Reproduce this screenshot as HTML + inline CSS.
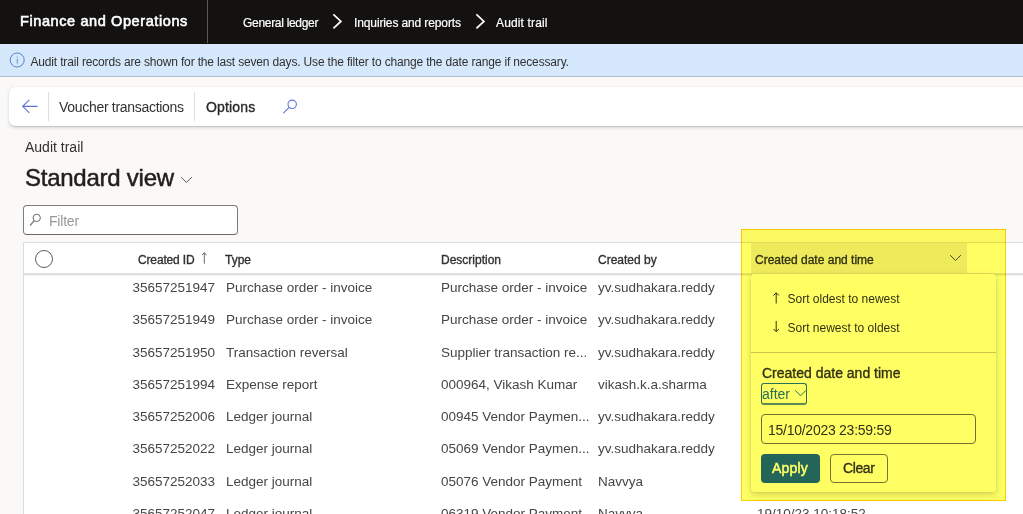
<!DOCTYPE html>
<html><head><meta charset="utf-8">
<style>
*{box-sizing:border-box;margin:0;padding:0}
html,body{width:1023px;height:514px;overflow:hidden;background:#faf9f8;font-family:"Liberation Sans",sans-serif;color:#323130}
.a{position:absolute;white-space:nowrap}
#top{position:absolute;left:0;top:0;width:1023px;height:44px;background:#131211}
#info{position:absolute;left:0;top:44px;width:1023px;height:33px;background:#d6e8fb;border-bottom:1px solid #b3bfcb}
#tb{position:absolute;left:9px;top:87px;width:1030px;height:39px;background:#fff;border-radius:6px;box-shadow:0 1.6px 3.6px rgba(0,0,0,.13),0 0.3px 0.9px rgba(0,0,0,.11)}
#grid{position:absolute;left:23px;top:242px;width:1010px;height:290px;background:#fff;border:1px solid #dedcda}
.hd{font-size:12px;color:#323130;-webkit-text-stroke:0.35px #323130}
.sb{-webkit-text-stroke:0.35px currentColor}
.sb5{-webkit-text-stroke:0.5px currentColor}
.sb2{-webkit-text-stroke:0.2px currentColor}
.cell{font-size:13.5px;color:#474645;letter-spacing:0}
#hl{position:absolute;left:740.5px;top:229px;width:265px;height:272px;background:#ffff64;mix-blend-mode:multiply;border:1.8px solid #ffcc00}
#pop{position:absolute;left:751px;top:274px;width:245px;height:218px;background:#fff;border-radius:3px;box-shadow:0 3px 7px rgba(0,0,0,.16),0 0 2px rgba(0,0,0,.12)}
</style></head><body>

<div id="top">
  <div class="a m" style="left:20px;top:12.5px;font-size:14.5px;letter-spacing:0.6px;color:#fff;-webkit-text-stroke:0.6px #fff">Finance and Operations</div>
  <div style="position:absolute;left:207px;top:0;width:1px;height:43px;background:#5a5958"></div>
  <div class="a m sb2" style="left:243px;top:16px;font-size:12px;color:#fff;letter-spacing:-0.3px">General ledger</div>
  <svg class="a" style="left:331px;top:13px" width="12" height="18" viewBox="0 0 12 18"><path d="M2.4 1.4 L9.9 8.4 L2.4 15.4" fill="none" stroke="#fff" stroke-width="1.7"/></svg>
  <div class="a m sb2" style="left:354px;top:16px;font-size:12px;letter-spacing:-0.12px;color:#fff">Inquiries and reports</div>
  <svg class="a" style="left:474px;top:13px" width="12" height="18" viewBox="0 0 12 18"><path d="M2.4 1.4 L9.9 8.4 L2.4 15.4" fill="none" stroke="#fff" stroke-width="1.7"/></svg>
  <div class="a m sb2" style="left:496px;top:16px;font-size:12px;letter-spacing:0.15px;color:#fff">Audit trail</div>
</div>

<div id="info">
  <svg class="a" style="left:9px;top:8px" width="18" height="18" viewBox="0 0 18 18"><circle cx="8.2" cy="8" r="7" fill="none" stroke="#5487c8" stroke-width="1"/><rect x="7.8" y="6.8" width="0.9" height="4.8" fill="#5a86c0"/><circle cx="8.25" cy="5" r="0.6" fill="#5a86c0"/></svg>
  <div class="a m" style="left:30.5px;top:10.5px;font-size:12px;color:#323130;letter-spacing:-0.165px">Audit trail records are shown for the last seven days. Use the filter to change the date range if necessary.</div>
</div>

<div id="tb">
  <svg class="a" style="left:12px;top:11px" width="17" height="16" viewBox="0 0 17 16"><path d="M1.7 8.3 H16.6 M8.3 1.9 L1.7 8.3 L8.3 14.8" fill="none" stroke="#5f74d8" stroke-width="1.15"/></svg>
  <div style="position:absolute;left:39px;top:5px;width:1px;height:29px;background:#e1dfdd"></div>
  <div class="a m" style="left:50px;top:12px;font-size:14px;color:#323130;letter-spacing:-0.3px">Voucher transactions</div>
  <div style="position:absolute;left:185px;top:5px;width:1px;height:29px;background:#e1dfdd"></div>
  <div class="a m sb" style="left:197px;top:12px;font-size:14px;letter-spacing:0.15px;color:#2b2a29">Options</div>
  <svg class="a" style="left:273px;top:11px" width="18" height="18" viewBox="0 0 18 18"><circle cx="10.2" cy="6.3" r="4.2" fill="none" stroke="#6276dc" stroke-width="1.1"/><path d="M7.2 9.3 L1.6 14.9" stroke="#6276dc" stroke-width="1.1" stroke-linecap="round"/></svg>
</div>

<div class="a m" style="left:25px;top:139px;font-size:14px;color:#323130">Audit trail</div>
<div class="a m sb5" style="left:25px;top:164px;font-size:24px;letter-spacing:-0.25px;color:#201f1e">Standard view</div>
<svg class="a" style="left:180px;top:175px" width="14" height="10" viewBox="0 0 14 10"><path d="M1 2.2 L6.3 7.4 L11.9 2.2" fill="none" stroke="#5d5b59" stroke-width="1"/></svg>

<div style="position:absolute;left:23px;top:205px;width:215px;height:30px;background:#fff;border:1.5px solid #7d7c7b;border-bottom-color:#6d6c6b;border-radius:4px"></div>
<svg class="a" style="left:28px;top:213px" width="15" height="15" viewBox="0 0 15 15"><circle cx="8.7" cy="4.9" r="3.7" fill="none" stroke="#6a6a6a" stroke-width="1"/><path d="M6.1 7.6 L2.1 12.6" stroke="#6a6a6a" stroke-width="1.1"/></svg>
<div class="a m" style="left:49px;top:213px;font-size:14px;color:#9a9896;letter-spacing:-0.2px">Filter</div>

<div id="grid"></div>
<div style="position:absolute;left:24px;top:273px;width:1000px;height:1px;background:#e6e4e2"></div><div style="position:absolute;left:24px;top:274px;width:1000px;height:1px;background:#dcdad8"></div>
<div style="position:absolute;left:24px;top:275px;width:1000px;height:2px;background:linear-gradient(#f1f0ef,#fff)"></div>
<div style="position:absolute;left:751px;top:243px;width:216px;height:29.5px;background:#edebe9"></div>
<div style="position:absolute;left:35px;top:250px;width:18px;height:18px;border:1.3px solid #605e5c;border-radius:50%"></div>
<div class="a m hd" style="left:138px;top:253px;letter-spacing:-0.15px">Created ID</div>
<svg class="a" style="left:200px;top:252px" width="10" height="12" viewBox="0 0 10 12"><path d="M4.3 11.7 V0.8 M2 3 L4.3 0.8 L6.6 3" fill="none" stroke="#5a5856" stroke-width="0.9"/></svg>
<div class="a m hd" style="left:225px;top:253px">Type</div>
<div class="a m hd" style="left:441px;top:253px">Description</div>
<div class="a m hd" style="left:598px;top:253px">Created by</div>
<div class="a m hd" style="left:755px;top:253px">Created date and time</div>
<svg class="a" style="left:949px;top:253px" width="13" height="10" viewBox="0 0 13 10"><path d="M1.2 2.2 L6.5 7.5 L11.8 2.2" fill="none" stroke="#484644" stroke-width="1"/></svg>

<div class="a m cell" style="right:808px;top:280.0px">35657251947</div>
<div class="a m cell" style="left:226px;top:280.0px">Purchase order - invoice</div>
<div class="a m cell" style="left:441px;top:280.0px">Purchase order - invoice</div>
<div class="a m cell" style="left:598px;top:280.0px">yv.sudhakara.reddy</div>
<div class="a m cell" style="right:808px;top:312.4px">35657251949</div>
<div class="a m cell" style="left:226px;top:312.4px">Purchase order - invoice</div>
<div class="a m cell" style="left:441px;top:312.4px">Purchase order - invoice</div>
<div class="a m cell" style="left:598px;top:312.4px">yv.sudhakara.reddy</div>
<div class="a m cell" style="right:808px;top:344.8px">35657251950</div>
<div class="a m cell" style="left:226px;top:344.8px">Transaction reversal</div>
<div class="a m cell" style="left:441px;top:344.8px">Supplier transaction re...</div>
<div class="a m cell" style="left:598px;top:344.8px">yv.sudhakara.reddy</div>
<div class="a m cell" style="right:808px;top:377.2px">35657251994</div>
<div class="a m cell" style="left:226px;top:377.2px">Expense report</div>
<div class="a m cell" style="left:441px;top:377.2px">000964, Vikash Kumar</div>
<div class="a m cell" style="left:598px;top:377.2px">vikash.k.a.sharma</div>
<div class="a m cell" style="right:808px;top:408.6px">35657252006</div>
<div class="a m cell" style="left:226px;top:408.6px">Ledger journal</div>
<div class="a m cell" style="left:441px;top:408.6px">00945 Vendor Paymen...</div>
<div class="a m cell" style="left:598px;top:408.6px">yv.sudhakara.reddy</div>
<div class="a m cell" style="right:808px;top:441.0px">35657252022</div>
<div class="a m cell" style="left:226px;top:441.0px">Ledger journal</div>
<div class="a m cell" style="left:441px;top:441.0px">05069 Vendor Paymen...</div>
<div class="a m cell" style="left:598px;top:441.0px">yv.sudhakara.reddy</div>
<div class="a m cell" style="right:808px;top:474.4px">35657252033</div>
<div class="a m cell" style="left:226px;top:474.4px">Ledger journal</div>
<div class="a m cell" style="left:441px;top:474.4px">05076 Vendor Payment</div>
<div class="a m cell" style="left:598px;top:474.4px">Navvya</div>
<div class="a m cell" style="right:808px;top:505.5px">35657252047</div>
<div class="a m cell" style="left:226px;top:505.5px">Ledger journal</div>
<div class="a m cell" style="left:441px;top:505.5px">06319 Vendor Payment</div>
<div class="a m cell" style="left:598px;top:505.5px">Navvya</div>
<div class="a m cell" style="left:757px;top:505.5px">19/10/23 10:18:52</div>

<div id="pop">
  <svg class="a" style="left:20px;top:17px" width="10" height="14" viewBox="0 0 10 14"><path d="M5.2 12.5 V1.8 M2.5 4.5 L5.2 1.8 L7.9 4.5" fill="none" stroke="#323130" stroke-width="1"/></svg>
  <div class="a m" style="left:36.5px;top:18px;font-size:12px;color:#323130;letter-spacing:0px">Sort oldest to newest</div>
  <svg class="a" style="left:20px;top:46px" width="10" height="14" viewBox="0 0 10 14"><path d="M5.2 1 V11.7 M2.5 9 L5.2 11.7 L7.9 9" fill="none" stroke="#323130" stroke-width="1"/></svg>
  <div class="a m" style="left:36.5px;top:47px;font-size:12px;color:#323130;letter-spacing:0px">Sort newest to oldest</div>
  <div style="position:absolute;left:0;top:78px;width:245px;height:1px;background:#c8c6c4"></div>
  <div class="a m sb" style="left:11px;top:91px;font-size:14px;color:#323130">Created date and time</div>
  <div style="position:absolute;left:10px;top:109px;width:46px;height:22px;border:1px solid #2a6fe0;border-bottom:2px solid #5a8ad0;border-radius:3px"></div>
  <div class="a m" style="left:11px;top:112px;font-size:14px;color:#2a6fe0">after</div>
  <svg class="a" style="left:43px;top:115px" width="14" height="9" viewBox="0 0 14 9"><path d="M1.2 1.3 L6.5 6.8 L12 1.3" fill="none" stroke="#2a6fe0" stroke-width="1"/></svg>
  <div style="position:absolute;left:10px;top:140px;width:215px;height:30px;border:1px solid #72706e;border-radius:4px;background:#fff"></div>
  <div class="a m" style="left:17px;top:148px;font-size:14px;color:#323130;letter-spacing:-0.26px">15/10/2023 23:59:59</div>
  <div style="position:absolute;left:10px;top:180px;width:59px;height:29px;background:#2365e0;border-radius:4px"></div>
  <div class="a m sb5" style="left:21px;top:186px;font-size:14px;letter-spacing:0.2px;color:#fff">Apply</div>
  <div style="position:absolute;left:79px;top:180px;width:58px;height:29px;border:1px solid #767574;border-radius:4px;background:#fff"></div>
  <div class="a m sb" style="left:92px;top:186px;font-size:14px;letter-spacing:-0.4px;color:#323130">Clear</div>
</div>

<div id="hl"></div>

</body></html>
